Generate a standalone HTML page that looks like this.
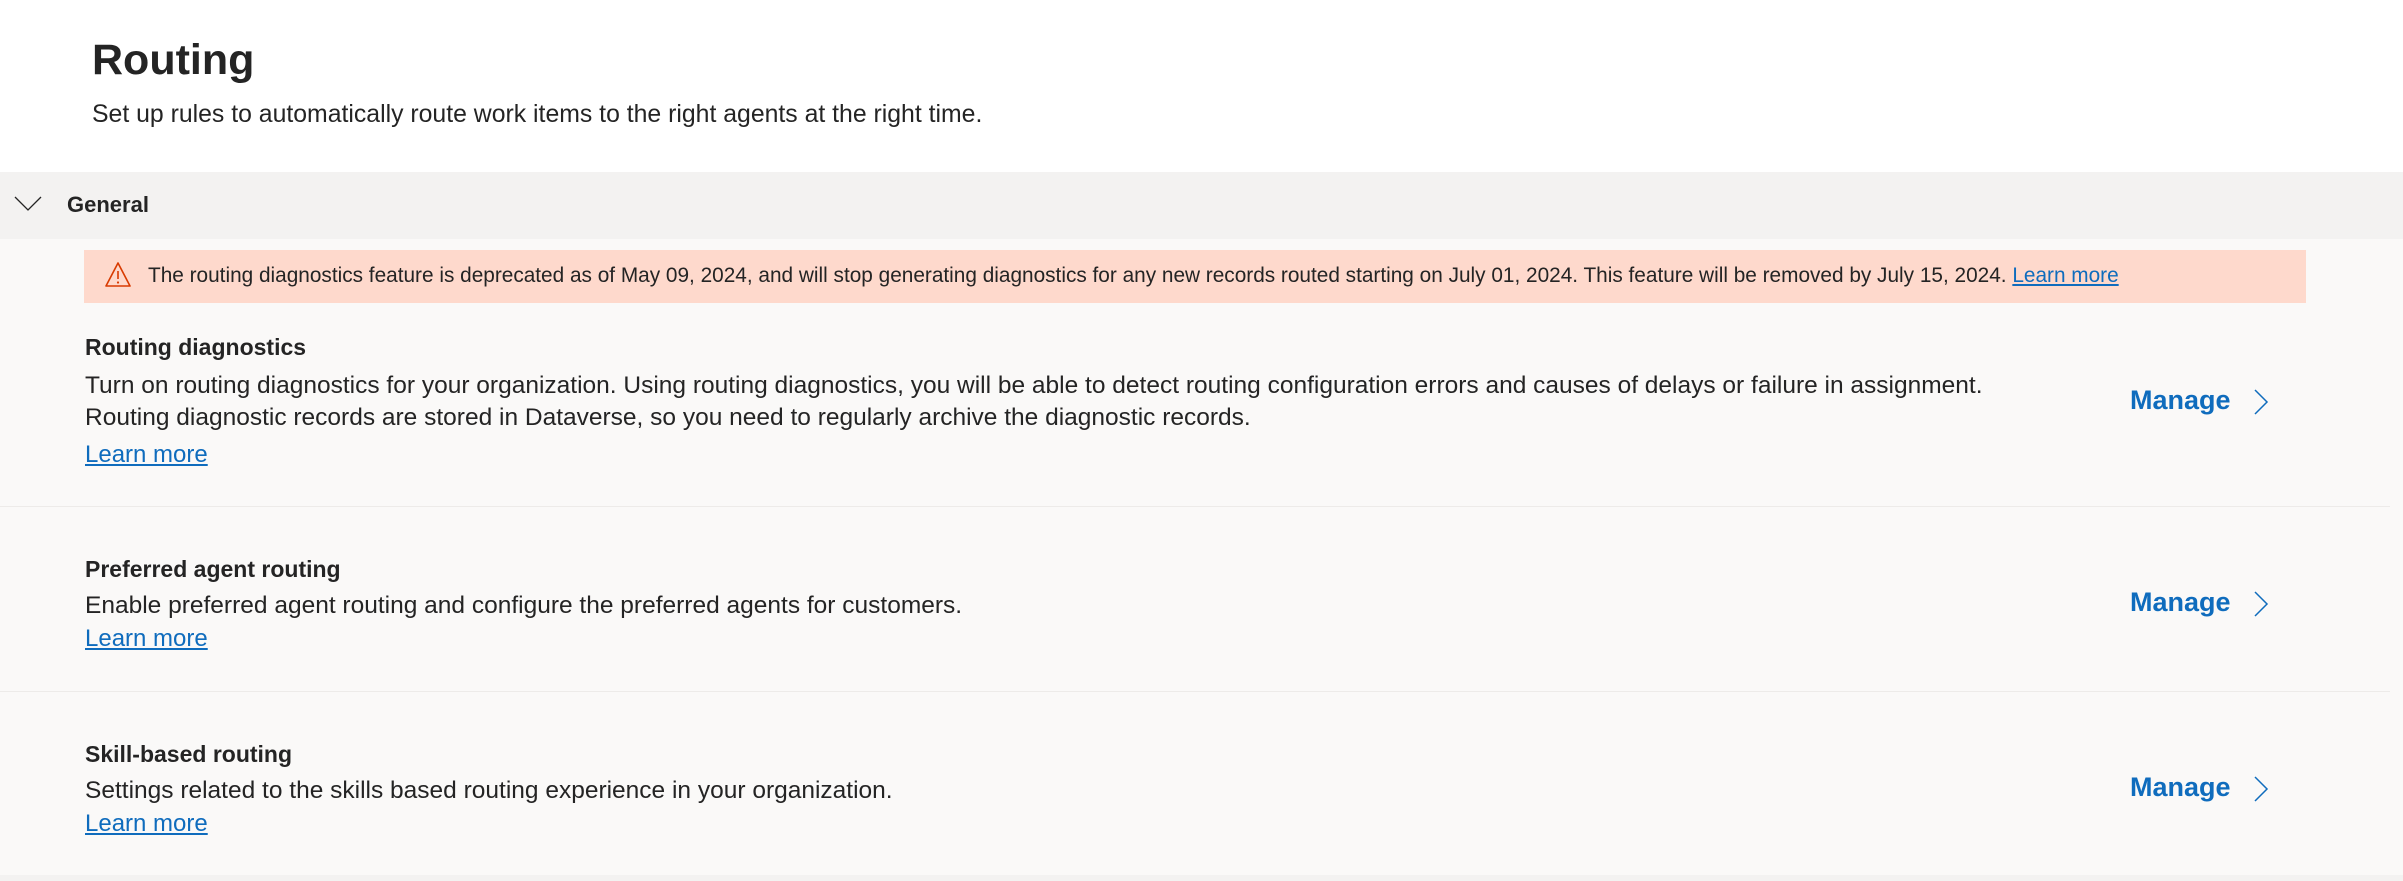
<!DOCTYPE html>
<html><head><meta charset="utf-8"><style>
*{margin:0;padding:0;box-sizing:border-box}
body{width:2403px;height:881px;background:#fff;font-family:"Liberation Sans",sans-serif;color:#242424;position:relative;overflow:hidden}
.a{position:absolute;white-space:nowrap}
h1{position:absolute;left:92px;top:36px;font-size:43px;font-weight:600;color:#242424}
.sub{left:92px;top:101px;font-size:24.8px}
.band{position:absolute;left:0;top:172px;width:2403px;height:67px;background:#f3f2f1}
.content{position:absolute;left:0;top:239px;width:2403px;height:636px;background:#faf9f8}
.warn{position:absolute;left:84px;top:250px;width:2222px;height:53px;background:#fed9cc}
.warn span{position:absolute;left:64px;top:14px;font-size:20.8px;white-space:nowrap}
a{color:#0f6cbd;text-decoration:underline}
.t{font-size:23px;font-weight:bold;left:85px}
.d{font-size:24.5px;left:85px;line-height:32px}
.l{font-size:24px;left:85px;color:#0f6cbd;text-decoration:underline}
.div{position:absolute;left:0;width:2390px;height:1px;background:#edebe9}
.m{left:2130px;font-size:27px;font-weight:bold;color:#0f6cbd}
.bottom{position:absolute;left:0;top:875px;width:2403px;height:6px;background:#f3f2f1}
</style></head><body>
<h1>Routing</h1>
<div class="a sub">Set up rules to automatically route work items to the right agents at the right time.</div>
<div class="band">
<svg class="a" style="left:14px;top:24px" width="28" height="16" viewBox="0 0 28 16"><path d="M1 1 L14 14 L27 1" fill="none" stroke="#242424" stroke-width="1.3"/></svg>
<div class="a" style="left:67px;top:20px;font-size:22px;font-weight:600">General</div>
</div>
<div class="content"></div>
<div class="warn">
<svg class="a" style="left:20px;top:11px" width="28" height="28" viewBox="0 0 28 28"><path d="M14 2 L26 25 L2 25 Z" fill="none" stroke="#d83b01" stroke-width="1.6" stroke-linejoin="round"/><path d="M14 10 V18" stroke="#d83b01" stroke-width="1.6"/><circle cx="14" cy="21.5" r="1.1" fill="#d83b01"/></svg>
<span>The routing diagnostics feature is deprecated as of May 09, 2024, and will stop generating diagnostics for any new records routed starting on July 01, 2024. This feature will be removed by July 15, 2024. <a>Learn more</a></span>
</div>

<div class="a t" style="top:334px">Routing diagnostics</div>
<div class="a d" style="top:370px">Turn on routing diagnostics for your organization. Using routing diagnostics, you will be able to detect routing configuration errors and causes of delays or failure in assignment.<br>Routing diagnostic records are stored in Dataverse, so you need to regularly archive the diagnostic records.</div>
<div class="a l" style="top:441px">Learn more</div>
<div class="a m" style="top:385px">Manage</div>
<svg class="a" style="left:2253px;top:388px" width="16" height="28" viewBox="0 0 16 28"><path d="M2 2 L14 14 L2 26" fill="none" stroke="#0f6cbd" stroke-width="1.5"/></svg>
<div class="div" style="top:506px"></div>

<div class="a t" style="top:556px">Preferred agent routing</div>
<div class="a d" style="top:590px">Enable preferred agent routing and configure the preferred agents for customers.</div>
<div class="a l" style="top:625px">Learn more</div>
<div class="a m" style="top:587px">Manage</div>
<svg class="a" style="left:2253px;top:590px" width="16" height="28" viewBox="0 0 16 28"><path d="M2 2 L14 14 L2 26" fill="none" stroke="#0f6cbd" stroke-width="1.5"/></svg>
<div class="div" style="top:691px"></div>

<div class="a t" style="top:741px">Skill-based routing</div>
<div class="a d" style="top:775px">Settings related to the skills based routing experience in your organization.</div>
<div class="a l" style="top:810px">Learn more</div>
<div class="a m" style="top:772px">Manage</div>
<svg class="a" style="left:2253px;top:775px" width="16" height="28" viewBox="0 0 16 28"><path d="M2 2 L14 14 L2 26" fill="none" stroke="#0f6cbd" stroke-width="1.5"/></svg>
<div class="bottom"></div>
</body></html>
